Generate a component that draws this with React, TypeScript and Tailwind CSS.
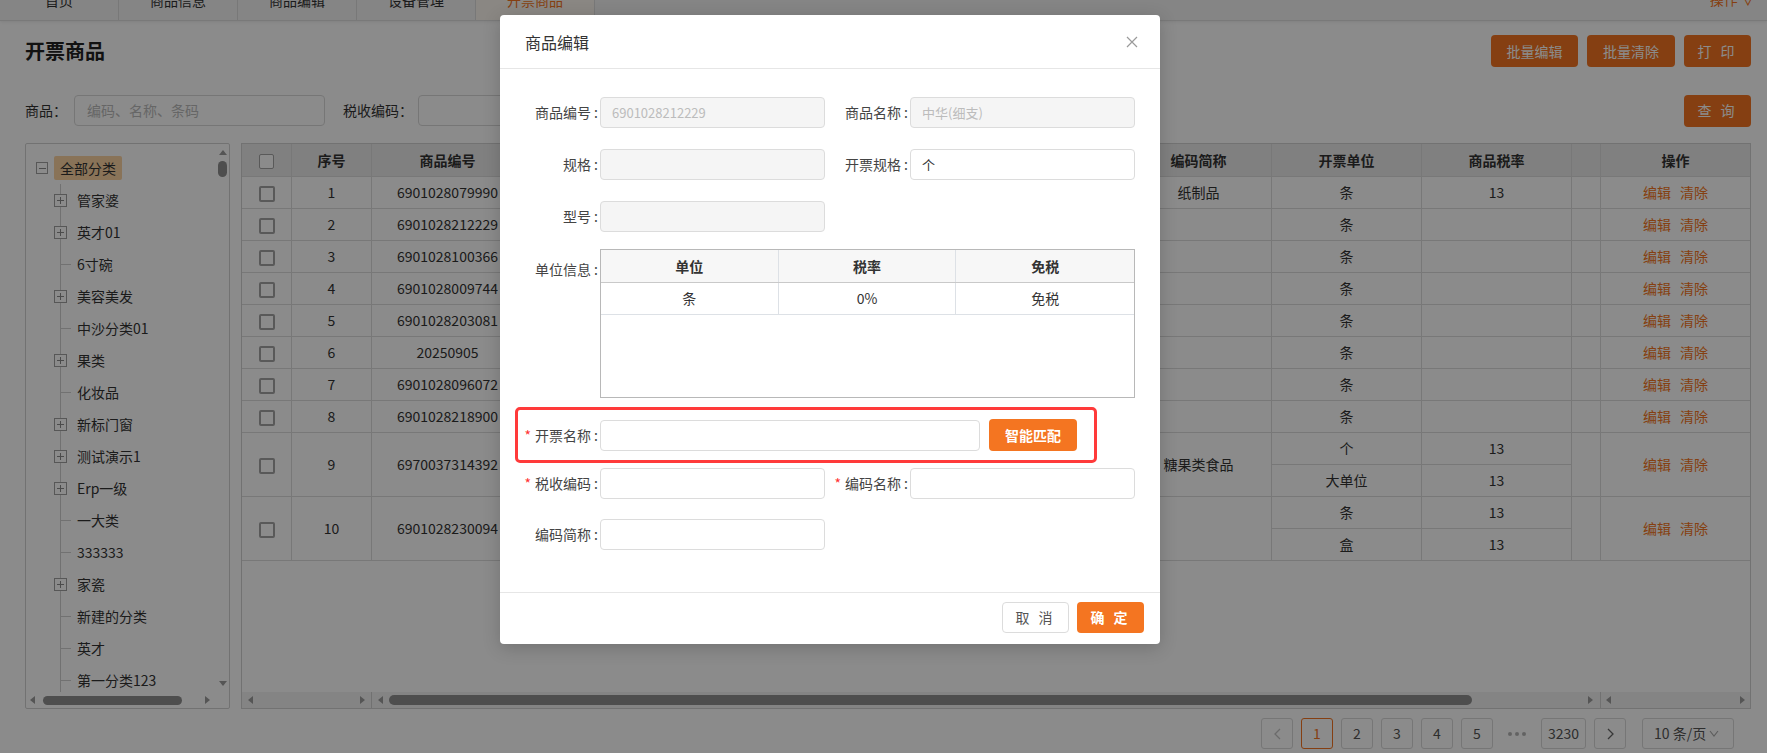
import React from "react";

interface Unit {
  unit: string;
  rate: string;
}

interface Goods {
  no: number;
  code: string;
  short: string;
  units: Unit[];
}

const tabs = ["首页", "商品信息", "商品编辑", "设备管理", "开票商品"];

const treeChildren = [
  { name: "管家婆", folder: true },
  { name: "英才01", folder: true },
  { name: "6寸碗", folder: false },
  { name: "美容美发", folder: true },
  { name: "中沙分类01", folder: false },
  { name: "果类", folder: true },
  { name: "化妆品", folder: false },
  { name: "新标门窗", folder: true },
  { name: "测试演示1", folder: true },
  { name: "Erp一级", folder: true },
  { name: "一大类", folder: false },
  { name: "333333", folder: false },
  { name: "家瓷", folder: true },
  { name: "新建的分类", folder: false },
  { name: "英才", folder: false },
  { name: "第一分类123", folder: false },
];

const goods: Goods[] = [
  { no: 1, code: "6901028079990", short: "纸制品", units: [{ unit: "条", rate: "13" }] },
  { no: 2, code: "6901028212229", short: "", units: [{ unit: "条", rate: "" }] },
  { no: 3, code: "6901028100366", short: "", units: [{ unit: "条", rate: "" }] },
  { no: 4, code: "6901028009744", short: "", units: [{ unit: "条", rate: "" }] },
  { no: 5, code: "6901028203081", short: "", units: [{ unit: "条", rate: "" }] },
  { no: 6, code: "20250905", short: "", units: [{ unit: "条", rate: "" }] },
  { no: 7, code: "6901028096072", short: "", units: [{ unit: "条", rate: "" }] },
  { no: 8, code: "6901028218900", short: "", units: [{ unit: "条", rate: "" }] },
  { no: 9, code: "6970037314392", short: "糖果类食品", units: [{ unit: "个", rate: "13" }, { unit: "大单位", rate: "13" }] },
  { no: 10, code: "6901028230094", short: "", units: [{ unit: "条", rate: "13" }, { unit: "盒", rate: "13" }] },
];

const td = "border-r border-b border-[#dcdcdc] text-center";

const Tri = ({ dir }: { dir: "l" | "r" | "u" | "d" }) => {
  const vert = dir === "u" || dir === "d";
  const pts = { l: "5,0 5,8 0,4", r: "0,0 0,8 5,4", u: "0,5 8,5 4,0", d: "0,0 8,0 4,5" }[dir];
  return (
    <svg width={vert ? 8 : 5} height={vert ? 5 : 8} viewBox={vert ? "0 0 8 5" : "0 0 5 8"} className="shrink-0">
      <polygon points={pts} fill="#9c9c9c" />
    </svg>
  );
};

const BoxIcon = ({ plus }: { plus: boolean }) => (
  <svg width="7" height="7" viewBox="0 0 7 7">
    <line x1="0" y1="3.5" x2="7" y2="3.5" stroke="#8a8a8a" strokeWidth="1" />
    {plus && <line x1="3.5" y1="0" x2="3.5" y2="7" stroke="#8a8a8a" strokeWidth="1" />}
  </svg>
);

const CheckBox = () => (
  <span className="inline-block h-[16px] w-[16px] rounded-[2px] border-2 border-[#a3a3a3] bg-white align-middle" />
);

function Tree() {
  return (
    <div className="flex h-full w-[205px] shrink-0 flex-col rounded-[2px] border border-[#d2d2d2] bg-white">
      <div className="flex min-h-0 flex-1">
        <div className="min-w-0 flex-1 overflow-hidden pt-[8px]">
          <div className="flex h-[32px] items-center pl-[10px]">
            <span className="flex h-[12px] w-[12px] items-center justify-center border border-[#a0a0a0]">
              <BoxIcon plus={false} />
            </span>
            <span className="ml-[6px] rounded-[2px] bg-[#fbd3a2] px-[6px] leading-[24px]">全部分类</span>
          </div>
          <div className="ml-[34px] border-l border-[#d0d0d0]">
            {treeChildren.map((c) => (
              <div key={c.name} className="flex h-[32px] items-center whitespace-nowrap">
                {c.folder ? (
                  <span className="-ml-[7px] flex h-[13px] w-[13px] shrink-0 items-center justify-center border border-[#a0a0a0] bg-white">
                    <BoxIcon plus />
                  </span>
                ) : (
                  <span className="w-[10px] shrink-0 border-t border-[#d0d0d0]" />
                )}
                <span className={c.folder ? "ml-[10px]" : "ml-[6px]"}>{c.name}</span>
              </div>
            ))}
          </div>
        </div>
        <div className="flex w-[13px] shrink-0 flex-col items-center pt-[6px] pb-[6px]">
          <Tri dir="u" />
          <span className="mt-[6px] h-[16px] w-[9px] rounded-full bg-[#8f8f8f]" />
          <span className="flex-1" />
          <Tri dir="d" />
        </div>
      </div>
      <div className="flex h-[16px] shrink-0 items-center pr-[19px] pl-[4px]">
        <Tri dir="l" />
        <span className="ml-[8px] h-[9px] w-[139px] rounded-full bg-[#8f8f8f]" />
        <span className="flex-1" />
        <Tri dir="r" />
      </div>
    </div>
  );
}

function GoodsTable() {
  // the columns between 商品编号 and 编码简称 sit under the dialog
  const headers = ["", "序号", "商品编号", "", "", "", "", "编码简称", "开票单位", "商品税率", "", "操作"];
  const widths = [50, 80, 152, 200, 100, 160, 142, 146, 150, 150, 29, 149];
  return (
    <div className="flex h-full min-w-0 flex-1 flex-col border border-[#d2d2d2] bg-white">
      <table className="w-full table-fixed border-separate border-spacing-0">
        <colgroup>
          {widths.map((w, i) => (
            <col key={i} style={{ width: w }} />
          ))}
        </colgroup>
        <thead>
          <tr>
            {headers.map((h, i) => (
              <th key={i} className={`h-[33px] bg-[#ebebeb] font-bold ${td} ${i === 11 ? "border-r-0" : ""}`}>
                {i === 0 ? <span className="inline-block h-[15px] w-[15px] rounded-[2px] border-[1.5px] border-[#a3a3a3] bg-white align-middle" /> : h}
              </th>
            ))}
          </tr>
        </thead>
        <tbody>
          {goods.map((g) => {
            const span = g.units.length;
            return (
              <React.Fragment key={g.no}>
                <tr>
                  <td rowSpan={span} className={td}>
                    <CheckBox />
                  </td>
                  <td rowSpan={span} className={td}>{g.no}</td>
                  <td rowSpan={span} className={td}>{g.code}</td>
                  <td rowSpan={span} className={td}></td>
                  <td rowSpan={span} className={td}></td>
                  <td rowSpan={span} className={td}></td>
                  <td rowSpan={span} className={td}></td>
                  <td rowSpan={span} className={td}>{g.short}</td>
                  <td className={`h-[32px] ${td}`}>{g.units[0].unit}</td>
                  <td className={td}>{g.units[0].rate}</td>
                  <td rowSpan={span} className={td}></td>
                  <td rowSpan={span} className={`${td} border-r-0`}>
                    <span className="text-[#f47521]">编辑</span>
                    <span className="ml-[9px] text-[#f47521]">清除</span>
                  </td>
                </tr>
                {span > 1 && (
                  <tr>
                    <td className={`h-[32px] ${td}`}>{g.units[1].unit}</td>
                    <td className={td}>{g.units[1].rate}</td>
                  </tr>
                )}
              </React.Fragment>
            );
          })}
        </tbody>
      </table>
      <div className="flex-1" />
      <div className="flex h-[16px] shrink-0 items-center bg-[#f3f3f3]">
        <div className="flex h-full w-[130px] items-center justify-between border-r border-[#cfcfcf] px-[6px]">
          <Tri dir="l" />
          <Tri dir="r" />
        </div>
        <div className="flex h-full flex-1 items-center border-r border-[#cfcfcf] pr-[7px] pl-[6px]">
          <Tri dir="l" />
          <span className="ml-[6px] h-[10px] w-[1083px] rounded-full bg-[#8f8f8f]" />
          <span className="flex-1" />
          <Tri dir="r" />
        </div>
        <div className="flex h-full w-[149px] items-center justify-between px-[5px]">
          <Tri dir="l" />
          <Tri dir="r" />
        </div>
      </div>
    </div>
  );
}

function Pager() {
  const box = "flex h-[31px] w-[32px] items-center justify-center rounded-[3px] border border-[#d9d9d9] bg-white text-[#555]";
  return (
    <div className="mt-[9px] flex h-[31px] items-center justify-end gap-[8px] pr-[33px]">
      <span className={box}>
        <svg width="7" height="12" viewBox="0 0 7 12"><polyline points="6,1 1,6 6,11" fill="none" stroke="#c4c4c4" strokeWidth="1.3" /></svg>
      </span>
      <span className="flex h-[31px] w-[32px] items-center justify-center rounded-[3px] border border-[#f47521] bg-white text-[#f47521]">1</span>
      {["2", "3", "4", "5"].map((n) => (
        <span key={n} className={box}>{n}</span>
      ))}
      <span className="flex w-[32px] items-center justify-center gap-[3px]">
        <span className="h-[4px] w-[4px] rounded-full bg-[#b5b5b5]" />
        <span className="h-[4px] w-[4px] rounded-full bg-[#b5b5b5]" />
        <span className="h-[4px] w-[4px] rounded-full bg-[#b5b5b5]" />
      </span>
      <span className="flex h-[31px] w-[45px] items-center justify-center rounded-[3px] border border-[#d9d9d9] bg-white text-[#555]">3230</span>
      <span className={box}>
        <svg width="7" height="12" viewBox="0 0 7 12"><polyline points="1,1 6,6 1,11" fill="none" stroke="#666" strokeWidth="1.3" /></svg>
      </span>
      <span className="ml-[8px] flex h-[31px] w-[92px] items-center rounded-[3px] border border-[#d9d9d9] bg-white pl-[11px] text-[#555]">
        10 条/页
        <svg className="ml-[3px]" width="10" height="7" viewBox="0 0 10 7"><polyline points="1,1 5,6 9,1" fill="none" stroke="#aaa" strokeWidth="1.1" /></svg>
      </span>
    </div>
  );
}

const Label = ({ w, req, children }: { w: string; req?: boolean; children: React.ReactNode }) => (
  <div className={`${w} shrink-0 whitespace-nowrap pr-[2px] text-right text-[#444]`}>
    {req && <span className="mr-[4px] text-[#f33]">*</span>}
    {children}
  </div>
);

const Field = ({ w = "w-[225px]", value = "", disabled, dim }: { w?: string; value?: string; disabled?: boolean; dim?: boolean }) => (
  <div
    className={`${w} flex h-[31px] shrink-0 items-center rounded-[4px] border border-[#dcdcdc] pl-[11px] text-[13px] ${
      disabled ? "bg-[#f5f5f5]" : "bg-white"
    } ${dim ? "text-[#bcbcbc]" : "text-[#333]"}`}
  >
    {value}
  </div>
);

function EditModal() {
  return (
    <div className="absolute top-[15px] left-[500px] w-[660px] rounded-[4px] bg-white shadow-[0_4px_18px_rgba(0,0,0,0.18)]">
      <div className="flex h-[54px] items-center justify-between border-b border-[#e6e6e6] pr-[22px] pl-[25px]">
        <span className="text-[16px] text-[#333]">商品编辑</span>
        <svg width="12" height="12" viewBox="0 0 12 12">
          <path d="M1 1 L11 11 M11 1 L1 11" stroke="#9a9a9a" strokeWidth="1.2" fill="none" />
        </svg>
      </div>

      <div className="pt-[28px] pb-[42px]">
        <div className="flex h-[31px] items-center">
          <Label w="w-[100px]">商品编号 :</Label>
          <Field disabled dim value="6901028212229" />
          <Label w="w-[85px]">商品名称 :</Label>
          <Field disabled dim value="中华(细支)" />
        </div>
        <div className="mt-[21px] flex h-[31px] items-center">
          <Label w="w-[100px]">规格 :</Label>
          <Field disabled />
          <Label w="w-[85px]">开票规格 :</Label>
          <Field value="个" />
        </div>
        <div className="mt-[21px] flex h-[31px] items-center">
          <Label w="w-[100px]">型号 :</Label>
          <Field disabled />
        </div>
        <div className="mt-[17px] flex">
          <div className="w-[100px] shrink-0 pt-[10px] pr-[2px] text-right leading-[20px] text-[#444]">单位信息 :</div>
          <div className="h-[149px] w-[535px] border border-[#b8b8b8]">
            <div className="grid h-[33px] grid-cols-3 border-b border-[#c9c9c9] bg-[#f7f7f7] font-bold text-[#333]">
              <div className="flex items-center justify-center border-r border-[#dde1e6]">单位</div>
              <div className="flex items-center justify-center border-r border-[#dde1e6]">税率</div>
              <div className="flex items-center justify-center">免税</div>
            </div>
            <div className="grid h-[32px] grid-cols-3 border-b border-[#dde1e6] text-[#333]">
              <div className="flex items-center justify-center border-r border-[#dde1e6]">条</div>
              <div className="flex items-center justify-center border-r border-[#dde1e6]">0%</div>
              <div className="flex items-center justify-center">免税</div>
            </div>
          </div>
        </div>

        <div className="mt-[9px] ml-[15px] flex h-[56px] w-[582px] items-center rounded-[5px] border-[3px] border-[#ff3a3a]">
          <Label w="w-[82px]" req>开票名称 :</Label>
          <Field w="w-[380px]" />
          <button className="ml-[9px] h-[32px] w-[88px] rounded-[4px] bg-[#f47521] font-bold text-white">智能匹配</button>
        </div>

        <div className="mt-[5px] flex h-[31px] items-center">
          <Label w="w-[100px]" req>税收编码 :</Label>
          <Field />
          <Label w="w-[85px]" req>编码名称 :</Label>
          <Field />
        </div>
        <div className="mt-[20px] flex h-[31px] items-center">
          <Label w="w-[100px]">编码简称 :</Label>
          <Field />
        </div>
      </div>

      <div className="flex justify-end gap-[8px] border-t border-[#e6e6e6] pt-[9px] pr-[16px] pb-[11px]">
        <button className="h-[31px] w-[67px] rounded-[4px] border border-[#dcdcdc] bg-white tracking-[3px] text-[#555]">取 消</button>
        <button className="h-[31px] w-[67px] rounded-[4px] bg-[#f47521] font-bold tracking-[3px] text-white">确 定</button>
      </div>
    </div>
  );
}

export default function App() {
  return (
    <div className="relative h-[753px] w-full overflow-hidden bg-white font-['Noto_Sans_CJK_SC','Noto_Sans',sans-serif] text-[14px] text-[#333]">
      <div className="flex h-[21px] border-b border-[#dedede] bg-[#f4f4f4] shadow-[0_1px_3px_rgba(0,0,0,0.08)]">
        {tabs.map((t, i) => (
          <div
            key={t}
            className={`flex h-full w-[119px] justify-center overflow-hidden border-r border-[#dcdcdc] ${
              i === 4 ? "bg-[#fdf7f1] text-[#f47521]" : "text-[#333]"
            }`}
          >
            <span className="-translate-y-[10px] leading-[20px]">{t}</span>
          </div>
        ))}
        <div className="ml-auto overflow-hidden pr-[12px]">
          <span className="block -translate-y-[11px] leading-[20px] text-[#f47521]">操作 ∨</span>
        </div>
      </div>

      <div className="mt-[14px] flex h-[32px] items-center justify-between pr-[16px] pl-[25px]">
        <h1 className="text-[20px] font-bold text-[#222]">开票商品</h1>
        <div className="flex gap-[9px]">
          <button className="h-[32px] w-[87px] rounded-[4px] bg-[#f47521] text-white">批量编辑</button>
          <button className="h-[32px] w-[88px] rounded-[4px] bg-[#f47521] text-white">批量清除</button>
          <button className="h-[32px] w-[67px] rounded-[4px] bg-[#f47521] tracking-[3px] text-white">打 印</button>
        </div>
      </div>

      <div className="mt-[27px] flex h-[33px] items-center pr-[16px] pl-[25px]">
        <span className="w-[49px]">商品：</span>
        <div className="flex h-[31px] w-[251px] items-center rounded-[4px] border border-[#d9d9d9] pl-[12px] text-[#bbb]">编码、名称、条码</div>
        <span className="ml-[18px] w-[75px]">税收编码：</span>
        <div className="h-[31px] w-[251px] rounded-[4px] border border-[#d9d9d9]" />
        <span className="flex-1" />
        <button className="h-[32px] w-[67px] rounded-[4px] bg-[#f47521] tracking-[3px] text-white">查 询</button>
      </div>

      <div className="mt-[16px] flex h-[566px] gap-[11px] pr-[16px] pl-[25px]">
        <Tree />
        <GoodsTable />
      </div>

      <Pager />

      <div className="absolute inset-0 bg-black/[0.455]" />
      <EditModal />
    </div>
  );
}
